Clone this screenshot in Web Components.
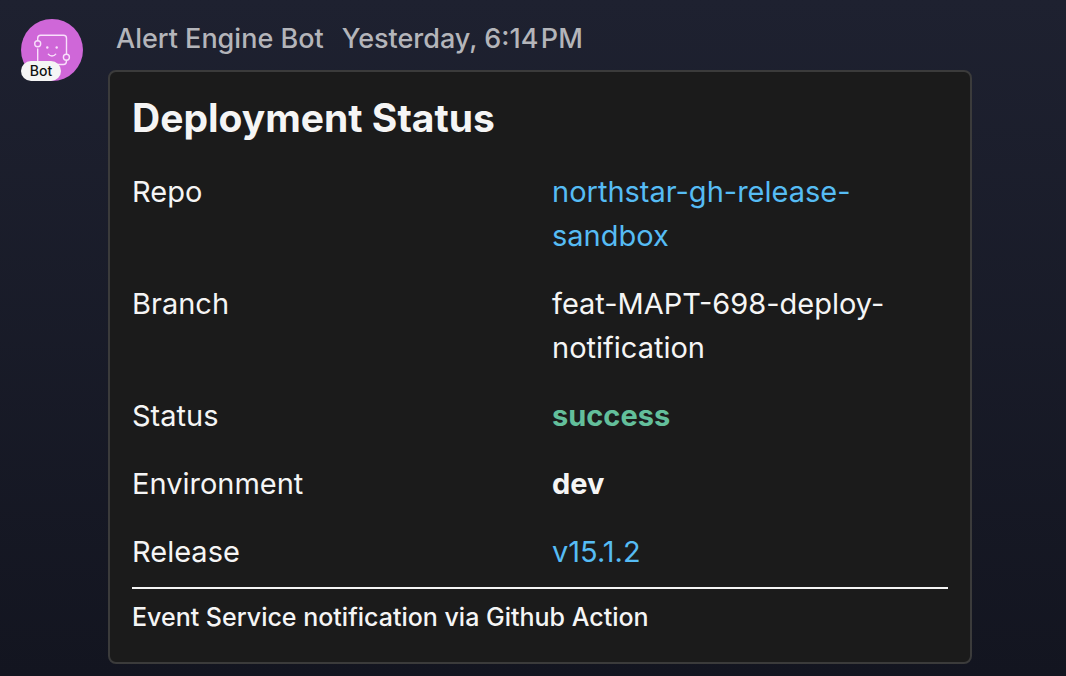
<!DOCTYPE html>
<html lang="en">
<head>
<meta charset="utf-8">
<meta name="viewport" content="width=device-width, initial-scale=1">
<title>Alert Engine Bot</title>
<style>
  html { min-height: 100%; background: linear-gradient(#1e2130, #131520); }
  body { margin: 0; font-family: Inter, "Liberation Sans", sans-serif; color: #f5f5f5; }
</style>
</head>
<body>
<chat-message author="Alert Engine Bot" time="Yesterday, 6:14&#8202;PM">
  <bot-avatar slot="avatar"></bot-avatar>
  <status-card heading="Deployment Status">
    <fact-row label="Repo"><a href="#repo">northstar-gh-release-sandbox</a></fact-row>
    <fact-row label="Branch">feat-MAPT-698-deploy-notification</fact-row>
    <fact-row label="Status" tone="good">success</fact-row>
    <fact-row label="Environment" tone="strong">dev</fact-row>
    <fact-row label="Release"><a href="#release">v15.1.2</a></fact-row>
    <span slot="footer">Event Service notification via Github Action</span>
  </status-card>
</chat-message>

<template id="chat-message">
  <style>
    :host { display: block; padding: 19px 94px 12px 21px; }
    article { display: grid; grid-template-columns: 62px minmax(0, 1fr); column-gap: 25px; }
    header { display: flex; flex-wrap: wrap; column-gap: 18px; padding-left: 8px; margin-bottom: 11px;
             font-size: 27px; line-height: 40px; font-weight: 500; color: #b4b5ba; }
  </style>
  <article>
    <slot name="avatar"></slot>
    <div>
      <header><span id="author"></span><time id="time"></time></header>
      <slot></slot>
    </div>
  </article>
</template>

<template id="bot-avatar">
  <style>
    :host { display: block; position: relative; width: 62px; height: 62px; }
    svg { display: block; width: 100%; height: 100%; }
    span { position: absolute; left: 0; bottom: 0; width: 40px; border-radius: 10px; background: #f5f5f5;
           color: #111; font-size: 14px; line-height: 20px; font-weight: 500; text-align: center; }
  </style>
  <svg viewBox="0 0 62 62" aria-hidden="true">
    <circle cx="31" cy="31" r="31" fill="#cf67d8"/>
    <g fill="none" stroke="#f9e0fb" stroke-width="1.4" stroke-linecap="round">
      <path d="M16.7 21.5V19.3a3 3 0 0 1 3-3H42.5a3 3 0 0 1 3 3V35M45.4 41.5V42.5a3 3 0 0 1-3 3H19.7a3 3 0 0 1-3-3V30"/>
      <circle cx="16.7" cy="24.7" r="3"/>
      <circle cx="45.4" cy="38.3" r="3"/>
      <path d="M27.3 35.2c1.8 2.4 5.6 2.4 7.4 0"/>
    </g>
    <g fill="#f9e0fb"><circle cx="26.3" cy="28.5" r="1.2"/><circle cx="35.7" cy="28.5" r="1.2"/></g>
  </svg>
  <span>Bot</span>
</template>

<template id="status-card">
  <style>
    :host { display: block; box-sizing: border-box; padding: 22px 22px 27px; border: 2px solid #3b3b3b;
            border-radius: 8px; background: #1b1b1b; }
    h2 { margin: 0 0 28px; font-size: 39px; line-height: 48px; font-weight: 700; }
    .facts { display: grid; row-gap: 24px; font-size: 29px; line-height: 44px; }
    footer { margin-top: 13px; padding-top: 10px; border-top: 2px solid #f5f5f5; font-size: 25px; line-height: 36px; font-weight: 500; }
  </style>
  <h2></h2>
  <div class="facts"><slot></slot></div>
  <footer><slot name="footer"></slot></footer>
</template>

<template id="fact-row">
  <style>
    :host { display: block; }
    dl { display: grid; grid-template-columns: repeat(2, minmax(0, 1fr)); column-gap: 24px; margin: 0; }
    dd { margin: 0; overflow-wrap: break-word; }
    :host([tone]) dd { font-weight: 700; }
    :host([tone="good"]) dd { color: #63bf9b; }
    ::slotted(a) { color: #56bcf4; text-decoration: none; }
  </style>
  <dl><dt></dt><dd><slot></slot></dd></dl>
</template>

<script>
  class TemplateElement extends HTMLElement {
    constructor() {
      super();
      const template = document.getElementById(this.localName);
      this.attachShadow({ mode: "open" }).append(template.content.cloneNode(true));
    }
    fill(selector, attribute) {
      this.shadowRoot.querySelector(selector).textContent = this.getAttribute(attribute);
    }
  }
  customElements.define("chat-message", class extends TemplateElement {
    connectedCallback() { this.fill("#author", "author"); this.fill("#time", "time"); }
  });
  customElements.define("bot-avatar", class extends TemplateElement {});
  customElements.define("status-card", class extends TemplateElement {
    connectedCallback() { this.fill("h2", "heading"); }
  });
  customElements.define("fact-row", class extends TemplateElement {
    connectedCallback() { this.fill("dt", "label"); }
  });
</script>
</body>
</html>
